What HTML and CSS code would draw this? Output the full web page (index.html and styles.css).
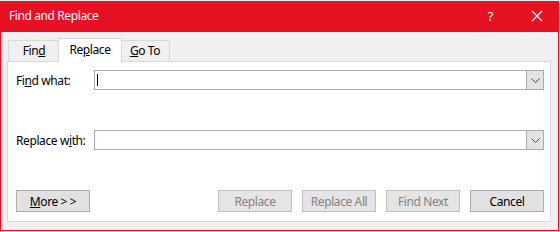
FILE: index.html
```html
<!DOCTYPE html>
<html lang="en">
<head>
  <meta charset="UTF-8" />
  <title>Find and Replace</title>
  <link rel="stylesheet" href="styles.css">
</head>
<body>
  <div class="window">
    <div class="titlebar">
      <span class="title">Find and Replace</span>
      <span class="help">?</span>
      <svg class="close" width="12" height="12" viewBox="0 0 12 12">
        <path d="M1 1 L11 11 M11 1 L1 11" stroke="#fff" stroke-width="1.2" fill="none" />
      </svg>
    </div>
    <div class="content">
      <div class="tabs">
        <div class="tab tab-find">Fin<u>d</u></div>
        <div class="tab active">Re<u>p</u>lace</div>
        <div class="tab tab-goto"><u>G</u>o To</div>
      </div>
      <div class="panel">
        <div class="row">
          <label>Fi<u>n</u>d what:</label>
          <div class="combo">
            <div class="field"><span class="caret"></span></div>
            <div class="drop">
              <svg width="9" height="5" viewBox="0 0 9 5"><path d="M0.5 0.5 L4.5 4.5 L8.5 0.5" stroke="#444" fill="none" /></svg>
            </div>
          </div>
        </div>
        <div class="row">
          <label>Replace w<u>i</u>th:</label>
          <div class="combo">
            <div class="field"></div>
            <div class="drop">
              <svg width="9" height="5" viewBox="0 0 9 5"><path d="M0.5 0.5 L4.5 4.5 L8.5 0.5" stroke="#444" fill="none" /></svg>
            </div>
          </div>
        </div>
        <div class="buttons">
          <button class="btn more"><u>M</u>ore &gt; &gt;</button>
          <div class="spacer"></div>
          <button class="btn" disabled>Replace</button>
          <button class="btn" disabled>Replace All</button>
          <button class="btn" disabled>Find Next</button>
          <button class="btn">Cancel</button>
        </div>
      </div>
    </div>
  </div>
</body>
</html>
```
FILE: styles.css
```css
body {
  margin: 0;
  background: #e9e9e9;
  font-family: "Segoe UI", "Noto Sans", sans-serif;
  font-size: 12px;
  letter-spacing: -0.4px;
  color: #000;
}

.window {
  margin-top: 1px;
  width: 557px;
  height: 228px;
  border: 1px solid #e81123;
  background: #f0f0f0;
  display: flex;
  flex-direction: column;
}

.titlebar {
  height: 30px;
  background: #e81123;
  color: #fff;
  display: flex;
  align-items: center;
}

.title {
  margin-left: 8px;
  flex: 1;
  padding-bottom: 3px;
}

.help {
  font-size: 13px;
  margin-right: 38px;
  padding-bottom: 3px;
}

.close {
  margin-right: 15px;
  margin-bottom: 2px;
}

.content {
  flex: 1;
  padding: 6px 7px 8px 6px;
  display: flex;
  flex-direction: column;
}

.tabs {
  display: flex;
  align-items: flex-end;
  height: 23px;
  padding-left: 1px;
}

.tab {
  box-sizing: border-box;
  height: 21px;
  line-height: 19px;
  text-align: center;
  border: 1px solid #d9d9d9;
  border-bottom: none;
  background: #f0f0f0;
}

.tab-find {
  width: 52px;
}

.tab-goto {
  width: 50px;
}

.tab.active {
  width: 64px;
  height: 24px;
  line-height: 22px;
  background: #fff;
  margin: 0 -2px -1px -2px;
  position: relative;
  z-index: 1;
}

.panel {
  flex: 1;
  background: #fff;
  border: 1px solid #d9d9d9;
  padding: 8px 6px 9px 8px;
  display: flex;
  flex-direction: column;
}

.row {
  display: flex;
  align-items: center;
  height: 20px;
  margin-bottom: 40px;
}

.row label {
  width: 78px;
}

.combo {
  flex: 1;
  display: flex;
  height: 20px;
  box-sizing: border-box;
  border: 1px solid #ababab;
}

.field {
  flex: 1;
  display: flex;
  align-items: center;
  padding-left: 2px;
}

.caret {
  width: 1px;
  height: 12px;
  background: #000;
}

.drop {
  width: 16px;
  background: #e3e3e3;
  border-left: 1px solid #ababab;
  display: flex;
  align-items: center;
  justify-content: center;
}

.buttons {
  display: flex;
  gap: 10px;
  margin-top: auto;
}

.spacer {
  flex: 1;
}

.btn {
  width: 74px;
  height: 22px;
  background: #e1e1e1;
  border: 1px solid #adadad;
  font-family: "Segoe UI", "Noto Sans", sans-serif;
  font-size: 12px;
  letter-spacing: -0.4px;
  color: #000;
  padding: 0;
}

.btn:disabled {
  background: #e5e5e5;
  border-color: #bfbfbf;
  color: #838383;
}
```
